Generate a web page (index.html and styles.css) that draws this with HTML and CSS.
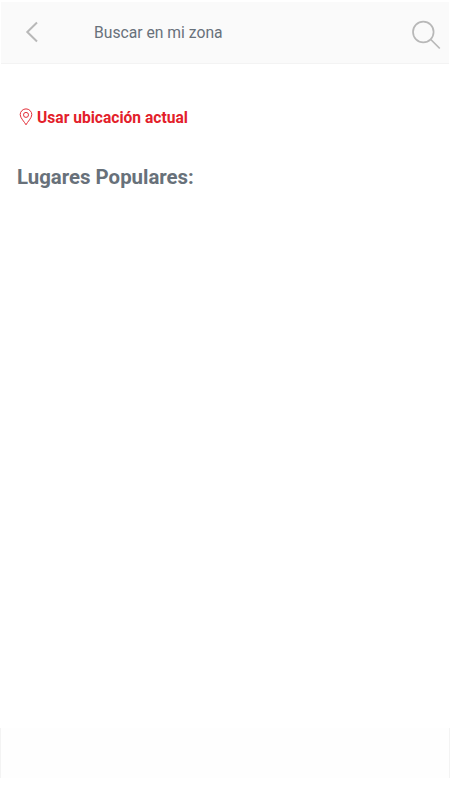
FILE: index.html
```html
<!DOCTYPE html>
<html lang="es">
<head>
<meta charset="utf-8">
<title>Buscar en mi zona</title>
<link rel="stylesheet" href="styles.css">
</head>
<body>
<header class="bar">
  <svg class="back" viewBox="0 0 14 22"><path d="M12 1.500 2.300 11l9.700 9.500"/></svg>
  <span class="query">Buscar en mi zona</span>
  <svg class="search" viewBox="0 0 30 30"><circle cx="12.300" cy="12" r="10.300"/><path d="m19.800 19.500 9 9"/></svg>
</header>
<main class="content">
  <a class="locate">
    <svg class="pin" viewBox="0 0 14 18"><path d="M7 16.800C5.500 13.800 1.200 10 1.200 6.700a5.800 5.800 0 0 1 11.600 0C12.800 10 8.500 13.800 7 16.800Z"/><circle cx="7" cy="6.900" r="2.500"/></svg>
    <span class="label">Usar ubicación actual</span>
  </a>
  <h1 class="title">Lugares Populares:</h1>
</main>
<div class="footer"></div>
</body>
</html>
```
FILE: styles.css
```css
* { box-sizing: border-box; }
body { margin: 0; height: 800px; display: flex; flex-direction: column; overflow: hidden; background: #fff; font-family: Roboto, sans-serif; color: #68717a; }
svg { fill: none; stroke-linecap: butt; flex: none; }
.bar { height: 64px; margin: 0 1px; padding: 0 8px 0 24px; display: flex; align-items: center; background: #fafafa; border-top: 2px solid #fff; border-bottom: 1px solid #f3f3f3; }
.back { width: 14px; height: 22px; margin-bottom: 2px; stroke: #b8b8b8; stroke-width: 2; }
.query { margin-left: 55px; font-size: 15.700px; line-height: 24px; }
.search { width: 30px; height: 30px; margin: 4px 0 0 auto; stroke: #b8b8b8; stroke-width: 1.700; }
.content { flex: 1; padding: 43px 17px 0; }
.locate { display: flex; align-items: center; gap: 4px; height: 20px; padding-left: 2px; color: #e3202a; font-size: 15.600px; font-weight: 700; }
.pin { width: 14px; height: 18px; stroke: #e3303a; stroke-width: 1; }
.label { line-height: 20px; padding-top: 1px; }
.title { margin: 38px 0 0; font-size: 20.400px; line-height: 24px; font-weight: 700; }
.footer { height: 50px; margin-bottom: 22px; border: solid #f3f3f3; border-width: 0 1px; background: #fefefe; }
```
